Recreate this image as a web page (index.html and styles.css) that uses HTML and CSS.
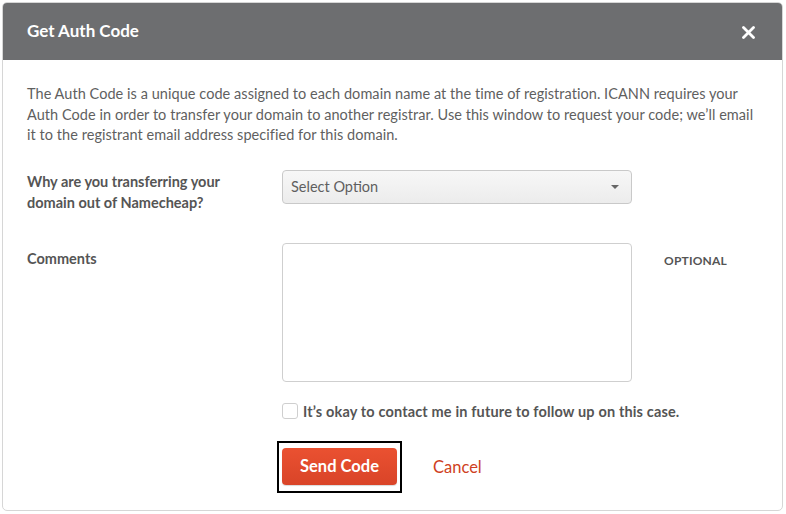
FILE: index.html
```html
<!DOCTYPE html>
<html lang="en">
<head>
<meta charset="utf-8">
<title>Get Auth Code</title>
<link rel="stylesheet" href="styles.css">
</head>
<body>
<div class="page">
  <div class="modal">
    <div class="modal-header">
      <h1 class="modal-title">Get Auth Code</h1>
      <button class="close" type="button" aria-label="Close">
        <svg width="13" height="13" viewBox="0 0 13 13"><path d="M1.5 1.5 L11.5 11.5 M11.5 1.5 L1.5 11.5" stroke="#fff" stroke-width="2.8" stroke-linecap="round"/></svg>
      </button>
    </div>
    <div class="modal-body">
      <p class="intro">The Auth Code is a unique code assigned to each domain name at the time of registration. ICANN requires your Auth Code in order to transfer your domain to another registrar. Use this window to request your code; we’ll email it to the registrant email address specified for this domain.</p>
      <div class="form-row row-select">
        <div class="field-label"><label class="label-text">Why are you transferring your domain out of Namecheap?</label></div>
        <div class="control">
          <div class="select">
            <span>Select Option</span>
            <span class="caret"></span>
          </div>
        </div>
        <div class="aside"></div>
      </div>
      <div class="form-row row-comments">
        <div class="field-label"><label class="label-text">Comments</label></div>
        <div class="control">
          <div class="textarea"></div>
        </div>
        <div class="aside optional">OPTIONAL</div>
      </div>
      <div class="form-row row-check">
        <div class="field-label"></div>
        <label class="check">
          <span class="box"></span>
          <span>It’s okay to contact me in future to follow up on this case.</span>
        </label>
      </div>
      <div class="form-row row-actions">
        <div class="field-label"></div>
        <div class="actions">
          <div class="focus-ring"><button class="btn-primary" type="button">Send Code</button></div>
          <a class="cancel" href="#">Cancel</a>
        </div>
      </div>
    </div>
  </div>
</div>
</body>
</html>
```
FILE: styles.css
```css
* { box-sizing: border-box; }
html, body { margin: 0; padding: 0; background: #fff; }
body {
  font-family: "Lato", "Open Sans", sans-serif;
  color: #5b5b5b;
}
.page {
  padding: 2px 3px 3px 2px;
}
.modal {
  width: 781px;
  height: 509px;
  border: 1px solid #d6d6d6;
  border-radius: 5px;
  overflow: hidden;
  background: #fff;
}
.modal-header {
  height: 57px;
  background: #6d6e70;
  display: flex;
  align-items: center;
  justify-content: space-between;
  padding: 0 27px 2px 24px;
}
.modal-title {
  margin: 0;
  font-size: 17px;
  font-weight: 700;
  color: #fff;
  letter-spacing: 0;
}
.close {
  background: none;
  border: 0;
  padding: 0;
  width: 13px;
  height: 13px;
  display: flex;
  margin-top: 3px;
}
.modal-body {
  padding: 24px 24px 0 24px;
}
.intro {
  margin: 0;
  font-size: 14.5px;
  line-height: 20.5px;
  color: #5f5f5f;
  letter-spacing: 0.05px;
}
.form-row {
  display: flex;
}
.field-label {
  width: 255px;
  flex: none;
  font-size: 14.5px;
  font-weight: 700;
  line-height: 21px;
  color: #555;
}
.label-text {
  display: block;
  max-width: 210px;
}
.control {
  width: 350px;
  flex: none;
}
.aside {
  padding-left: 32px;
}
.row-select {
  margin-top: 25px;
  height: 72px;
}
.select {
  height: 34px;
  border: 1px solid #c9c9c9;
  border-radius: 4px;
  background: linear-gradient(#f7f7f7, #ececec);
  display: flex;
  align-items: center;
  justify-content: space-between;
  padding: 0 12px 0 8px;
  font-size: 14.5px;
  color: #5f5f5f;
  margin-top: -1px;
}
.caret {
  width: 0;
  height: 0;
  border-left: 4px solid transparent;
  border-right: 4px solid transparent;
  border-top: 4px solid #666;
}
.row-comments .field-label {
  padding-top: 5px;
}
.textarea {
  height: 139px;
  border: 1px solid #cfcfcf;
  border-radius: 4px;
  background: #fff;
}
.optional {
  padding-top: 10px;
  font-size: 12px;
  font-weight: 700;
  letter-spacing: 0.2px;
  color: #555;
}
.row-check {
  margin-top: 21px;
}
.check {
  display: flex;
  align-items: center;
  gap: 5px;
  font-size: 14.5px;
  font-weight: 700;
  letter-spacing: 0.15px;
  color: #555;
}
.box {
  width: 16px;
  height: 16px;
  border: 1px solid #cfcfcf;
  border-radius: 3px;
  background: #fff;
}
.row-actions {
  margin-top: 21px;
}
.actions {
  display: flex;
  align-items: center;
  margin-left: -5px;
}
.focus-ring {
  border: 2px solid #000;
  padding: 5px 3px 6px 3px;
}
.btn-primary {
  width: 115px;
  height: 37px;
  border: 0;
  border-radius: 4px;
  background: linear-gradient(#ea5131, #d94428);
  color: #fff;
  font-family: inherit;
  font-size: 16.5px;
  font-weight: 700;
  box-shadow: 0 1px 1px rgba(0,0,0,0.15);
}
.cancel {
  margin-left: 31px;
  font-size: 16.5px;
  color: #cf3f22;
  text-decoration: none;
}
```
